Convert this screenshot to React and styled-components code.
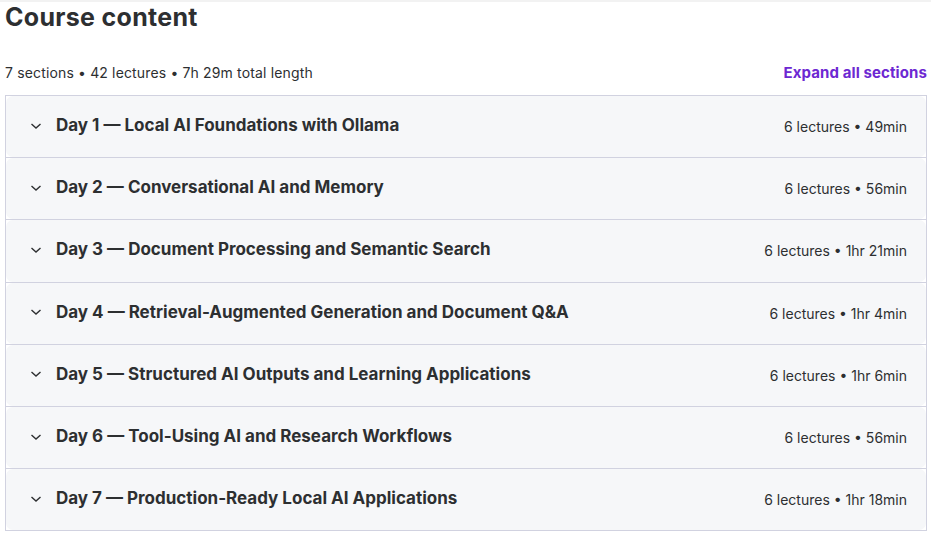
import React from "react";
import styled, { createGlobalStyle } from "styled-components";

const Global = createGlobalStyle`
  html, body { margin: 0; padding: 0; background: #fff; }
  body { font-family: Inter, "Noto Sans", "Liberation Sans", sans-serif; color: #2d2f31; }
`;

const Page = styled.div`
  border-top: 2px solid #f2f2f2;
  padding: 0 4px 0 5px;
`;

const Title = styled.h2`
  margin: 0;
  font-size: 25px;
  line-height: 30px;
  font-weight: 700;
  letter-spacing: 0.3px;
  color: #2d2f31;
`;

const Meta = styled.div`
  display: flex;
  justify-content: space-between;
  align-items: center;
  margin-top: 28px;
  height: 24px;
  font-size: 14px;
`;

const Stats = styled.span`
  color: #2d2f31;
  letter-spacing: 0.15px;
`;

const ExpandAll = styled.button`
  border: 0;
  background: none;
  padding: 0;
  font: inherit;
  font-size: 15px;
  font-weight: 700;
  letter-spacing: 0.1px;
  color: #6d28d2;
  cursor: pointer;
`;

const Panel = styled.div`
  margin-top: 11px;
  border: 1px solid #d1d2e0;
  border-bottom: 0;
  width: 920px;
`;

const Section = styled.div`
  border-bottom: 1px solid #d1d2e0;
`;

const Header = styled.div`
  display: flex;
  align-items: center;
  height: 61.2px;
  padding: 0 19px 0 24px;
  background: #f6f7f9;
  border-radius: 7px;
`;

const Chevron = styled.svg`
  width: 12px;
  height: 12px;
  flex: none;
  margin-right: 14px;
  margin-bottom: 2px;
`;

const SectionTitle = styled.span`
  flex: 1;
  font-size: 17px;
  font-weight: 700;
  color: #2d2f31;
  margin-bottom: 3px;
`;

const SectionMeta = styled.span`
  font-size: 14px;
  color: #2d2f31;
`;

const sections = [
  ["Day 1 — Local AI Foundations with Ollama", "6 lectures • 49min"],
  ["Day 2 — Conversational AI and Memory", "6 lectures • 56min"],
  ["Day 3 — Document Processing and Semantic Search", "6 lectures • 1hr 21min"],
  ["Day 4 — Retrieval-Augmented Generation and Document Q&A", "6 lectures • 1hr 4min"],
  ["Day 5 — Structured AI Outputs and Learning Applications", "6 lectures • 1hr 6min"],
  ["Day 6 — Tool-Using AI and Research Workflows", "6 lectures • 56min"],
  ["Day 7 — Production-Ready Local AI Applications", "6 lectures • 1hr 18min"],
];

export default function App() {
  return (
    <Page>
      <Global />
      <Title>Course content</Title>
      <Meta>
        <Stats>7 sections • 42 lectures • 7h 29m total length</Stats>
        <ExpandAll>Expand all sections</ExpandAll>
      </Meta>
      <Panel>
        {sections.map(([t, m]) => (
          <Section key={t}>
            <Header>
              <Chevron viewBox="0 0 12 12">
                <polyline points="1.5,4 6,8 10.5,4" fill="none" stroke="#2d2f31" strokeWidth="1.4" />
              </Chevron>
              <SectionTitle>{t}</SectionTitle>
              <SectionMeta>{m}</SectionMeta>
            </Header>
          </Section>
        ))}
      </Panel>
    </Page>
  );
}
